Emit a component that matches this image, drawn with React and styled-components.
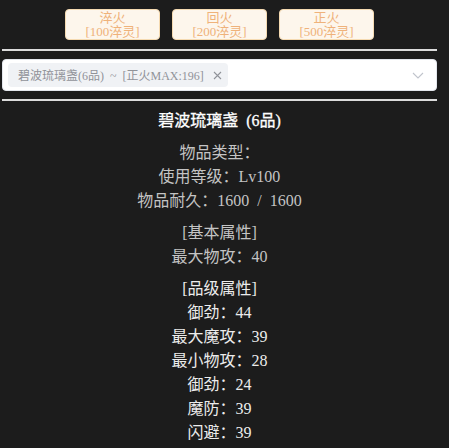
import React from "react";
import styled, { createGlobalStyle } from "styled-components";

const Global = createGlobalStyle`
  html, body { margin: 0; padding: 0; background: #1c1c1c; }
  body { font-family: "Liberation Serif", "Noto Sans CJK SC", serif; }
`;

const Page = styled.div`
  width: 435px;
  margin-left: 2px;
  padding-top: 9px;
  display: flex;
  flex-direction: column;
`;

const ButtonRow = styled.div`
  display: flex;
  justify-content: center;
  gap: 12px;
`;

const FireButton = styled.button`
  width: 95px;
  height: 31px;
  box-sizing: border-box;
  padding: 0;
  border: 1px solid #f5dab1;
  border-radius: 4px;
  background: #fdf6ec;
  color: #efb27a;
  font-family: "Liberation Serif", "Noto Sans CJK SC", serif;
  font-size: 13px;
  line-height: 14px;
  display: flex;
  flex-direction: column;
  align-items: center;
  justify-content: center;
  cursor: pointer;
`;

const ButtonLine = styled.span`
  display: block;
  height: 14px;
`;

const Rule = styled.div`
  height: 2px;
  background: #dcdcdc;
  margin: ${(p) => p.$m};
`;

const Select = styled.div`
  height: 32px;
  box-sizing: border-box;
  background: #fff;
  border: 1px solid #e4e7ed;
  border-radius: 4px;
  display: flex;
  align-items: center;
  padding: 0 12px 0 5px;
`;

const Tag = styled.span`
  height: 24px;
  box-sizing: border-box;
  display: inline-flex;
  align-items: center;
  gap: 9px;
  padding: 0 6px 0 10px;
  background: #f0f2f5;
  border-radius: 4px;
  color: #909399;
  font-size: 12px;
  word-spacing: 0.25em;
  white-space: nowrap;
`;

const Spacer = styled.div`
  flex: 1;
`;

const Detail = styled.div`
  margin-top: 8px;
  display: flex;
  flex-direction: column;
  gap: 8px;
  align-items: center;
  text-align: center;
  font-size: 16px;
  line-height: 24px;
  word-spacing: 0.25em;
`;

const Block = styled.div`
  display: flex;
  flex-direction: column;
  align-items: center;
  color: ${(p) => p.$color};
`;

const Title = styled.div`
  color: #ffffff;
  font-weight: normal;
  -webkit-text-stroke: 0.3px #ffffff;
`;

const Line = styled.div`
  white-space: nowrap;
`;

const Close = () => (
  <svg width="9" height="9" viewBox="0 0 9 9">
    <path d="M1 1 L8 8 M8 1 L1 8" stroke="#909399" strokeWidth="1.1" fill="none" />
  </svg>
);

const Chevron = () => (
  <svg width="12" height="7" viewBox="0 0 12 7">
    <path d="M1 1 L6 6 L11 1" stroke="#c0c4cc" strokeWidth="1.1" fill="none" />
  </svg>
);

const buttons = [
  ["淬火", "[100淬灵]"],
  ["回火", "[200淬灵]"],
  ["正火", "[500淬灵]"],
];

export default function App() {
  return (
    <>
      <Global />
      <Page>
        <ButtonRow>
          {buttons.map(([a, b]) => (
            <FireButton key={a}>
              <ButtonLine>{a}</ButtonLine>
              <ButtonLine>{b}</ButtonLine>
            </FireButton>
          ))}
        </ButtonRow>
        <Rule $m="9px 0 8px" />
        <Select>
          <Tag>
            <span>碧波琉璃盏(6品) ~ [正火MAX:196]</span>
            <Close />
          </Tag>
          <Spacer />
          <Chevron />
        </Select>
        <Rule $m="8px 0 0" />
        <Detail>
          <Title>碧波琉璃盏 (6品)</Title>
          <Block $color="#c4c4c4">
            <Line>物品类型：</Line>
            <Line>使用等级：Lv100</Line>
            <Line>物品耐久：1600 / 1600</Line>
          </Block>
          <Block $color="#c4c4c4">
            <Line>[基本属性]</Line>
            <Line>最大物攻：40</Line>
          </Block>
          <Block $color="#ececec">
            <Line>[品级属性]</Line>
            <Line>御劲：44</Line>
            <Line>最大魔攻：39</Line>
            <Line>最小物攻：28</Line>
            <Line>御劲：24</Line>
            <Line>魔防：39</Line>
            <Line>闪避：39</Line>
          </Block>
        </Detail>
      </Page>
    </>
  );
}
